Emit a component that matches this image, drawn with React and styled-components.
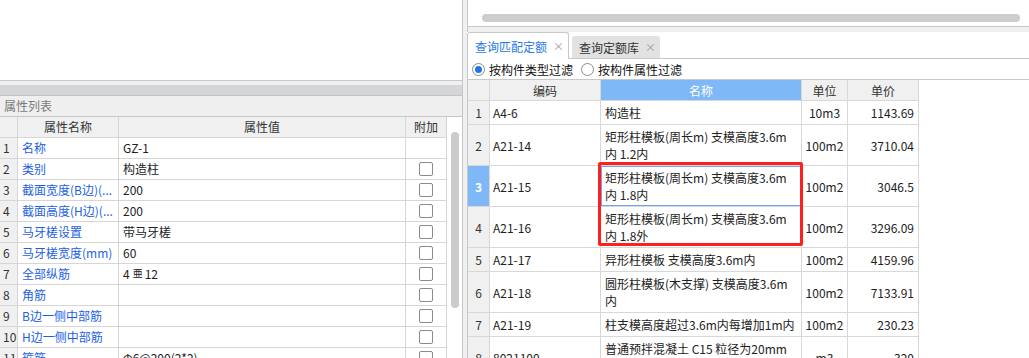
import React from 'react';
import styled, { createGlobalStyle, css } from 'styled-components';

const Global = createGlobalStyle`
  html, body { margin: 0; padding: 0; background: #fff; }
  body {
    font-family: "Noto Sans CJK SC", "Microsoft YaHei", "Liberation Sans", sans-serif;
    font-size: 12px;
    color: #222;
  }
  * { box-sizing: border-box; }
`;

const Screen = styled.div`
  display: flex;
  width: 1029px;
  height: 358px;
  overflow: hidden;
  background: #f0f0f0;
`;

/* ---------- left pane ---------- */
const LeftPane = styled.div`
  width: 463px;
  flex: none;
  display: flex;
  flex-direction: column;
  border-right: 1px solid #c6c6c6;
  background: #f0f0f0;
`;

const Canvas = styled.div`
  height: 81px;
  flex: none;
  background: #fff;
  border-bottom: 1px solid #c8c8c8;
`;

const Band = styled.div`
  margin-top: 4px;
  height: 11px;
  flex: none;
  background: #d5d6d9;
  border-bottom: 1px solid #c4c4c4;
`;

const PanelTitle = styled.div`
  height: 21px;
  flex: none;
  padding-left: 4px;
  line-height: 20px;
  color: #7b7b7b;
  background: #efefef;
  border-bottom: 1px solid #c8c8c8;
`;

const PropArea = styled.div`
  flex: 1;
  display: flex;
  background: #fff;
  min-height: 0;
`;

const PropGrid = styled.div`
  width: 447px;
  flex: none;
  display: flex;
  flex-direction: column;
`;

const PropRow = styled.div`
  display: grid;
  grid-template-columns: 18px 101px 287px 41px;
  height: 21px;
  flex: none;
`;

const PropCell = styled.div`
  border-right: 1px solid #d6d6d6;
  border-bottom: 1px solid #d6d6d6;
  line-height: 20px;
  white-space: nowrap;
  overflow: hidden;
  padding: 0 4px;
  color: #222;
  display: flex;
  align-items: center;
  ${(p) => p.$num && css`
    background: #f0f0f0;
    padding: 0 0 0 3px;
    color: #333;
  `}
  ${(p) => p.$head && css`
    background: #f0f0f0;
    justify-content: center;
    color: #333;
    padding: 0;
  `}
  ${(p) => p.$link && css`
    color: #1d5fe3;
  `}
  ${(p) => p.$center && css`
    justify-content: center;
    padding: 0;
  `}
`;

const Check = styled.span`
  width: 14px;
  height: 14px;
  border: 1px solid #8a8a8a;
  border-radius: 2px;
  background: #fff;
`;

const Rebar = styled.span`
  font-size: 10px;
  margin: 0 2px 0 3px;
  position: relative;
  top: -1px;
`;

const ScrollTrack = styled.div`
  width: 15px;
  flex: none;
  padding: 15px 3px 0 4px;
`;

const ScrollThumb = styled.div`
  width: 8px;
  height: 176px;
  border-radius: 4px;
  background: #cbcbcb;
`;

const Splitter = styled.div`
  width: 4px;
  flex: none;
  background: #f0f0f0;
`;

/* ---------- right pane ---------- */
const RightPane = styled.div`
  flex: 1;
  display: flex;
  flex-direction: column;
  border-left: 1px solid #c8c8c8;
  background: #fff;
  min-width: 0;
`;

const TopScroll = styled.div`
  height: 27px;
  flex: none;
  padding: 14px 9px 0 14px;
  border-bottom: 1px solid #c8c8c8;
  background: #fff;
`;

const HThumb = styled.div`
  height: 8px;
  border-radius: 4px;
  background: #cdcdcd;
`;

const TabGap = styled.div`
  height: 5px;
  flex: none;
  background: #f0f0f0;
`;

const TabStrip = styled.div`
  height: 27px;
  flex: none;
  display: flex;
  align-items: flex-end;
  gap: 3px;
  background: #fff;
  border-bottom: 1px solid #c8c8c8;
  margin-left: -1px;
`;

const Tab = styled.div`
  display: flex;
  align-items: center;
  gap: 6px;
  padding: 0 4px 0 7px;
  border-radius: 3px 3px 0 0;
  white-space: nowrap;
  font-size: 12px;
  ${(p) => p.$active ? css`
    height: 27px;
    margin-bottom: -1px;
    border: 1px solid #c8c8c8;
    border-bottom: none;
    background: #fff;
    color: #2a7ae6;
  ` : css`
    height: 22px;
    background: #e2e2e2;
    color: #333;
  `}
`;

const TabClose = styled.span`
  color: #9a9a9a;
  font-size: 11px;
  line-height: 1;
`;

const FilterBar = styled.div`
  height: 21px;
  flex: none;
  display: flex;
  align-items: center;
  gap: 8px;
  padding-left: 4px;
  border-bottom: 1px solid #c8c8c8;
  font-size: 12px;
  color: #111;
`;

const RadioItem = styled.label`
  display: flex;
  align-items: center;
  gap: 4px;
  white-space: nowrap;
`;

const RadioDot = styled.span`
  width: 13px;
  height: 13px;
  border-radius: 50%;
  border: 1px solid #8c8c8c;
  background: #fff;
  display: flex;
  align-items: center;
  justify-content: center;
  &::after {
    content: '';
    width: 7px;
    height: 7px;
    border-radius: 50%;
    background: ${(p) => (p.$on ? '#1f74e6' : 'transparent')};
  }
`;

const QuotaWrap = styled.div`
  position: relative;
  width: 451px;
`;

const QuotaRow = styled.div`
  display: grid;
  grid-template-columns: 22px 111px 201px 46px 71px;
  height: ${(p) => p.$h}px;
`;

const QCell = styled.div`
  border-right: 1px solid #d8d8d8;
  border-bottom: 1px solid #d8d8d8;
  overflow: hidden;
  white-space: nowrap;
  color: #222;
  line-height: 17px;
  display: flex;
  align-items: center;
  padding: 0 3px;
  ${(p) => p.$num && css`
    background: #f0f0f0;
    justify-content: center;
    padding: 0;
    color: #333;
  `}
  ${(p) => p.$sel && css`
    background: #7eb8f6;
    color: #fff;
    font-weight: 700;
  `}
  ${(p) => p.$head && css`
    background: ${p.$accent ? '#7eb8f6' : '#f0f0f0'};
    color: ${p.$accent ? '#fff' : '#333'};
    justify-content: center;
    padding: 0;
  `}
  ${(p) => p.$name && css`
    flex-direction: column;
    align-items: flex-start;
    justify-content: flex-start;
    padding: 3px 4px 0;
  `}
  ${(p) => p.$focus && css`
    box-shadow: inset 0 0 0 1px #6da7ea;
  `}
  ${(p) => p.$center && css`
    justify-content: center;
    padding: 0;
  `}
  ${(p) => p.$right && css`
    justify-content: flex-end;
    padding: 0 4px 0 0;
  `}
`;

const Line = styled.span`
  display: block;
  line-height: 17px;
`;

const Highlight = styled.div`
  position: absolute;
  left: 130px;
  top: 82px;
  width: 205px;
  height: 84px;
  border: 3px solid #ff1f1f;
  border-radius: 2px;
  pointer-events: none;
`;

const props = [
  ['名称', 'GZ-1', false],
  ['类别', '构造柱', true],
  ['截面宽度(B边)(...', '200', true],
  ['截面高度(H边)(...', '200', true],
  ['马牙槎设置', '带马牙槎', true],
  ['马牙槎宽度(mm)', '60', true],
  ['全部纵筋', 'rebar', true],
  ['角筋', '', true],
  ['B边一侧中部筋', '', true],
  ['H边一侧中部筋', '', true],
  ['箍筋', 'Φ6@200(2*2)', true],
];

const quotas = [
  { code: 'A4-6', name: ['构造柱'], unit: '10m3', price: '1143.69', h: 24 },
  { code: 'A21-14', name: ['矩形柱模板(周长m) 支模高度3.6m', '内 1.2内'], unit: '100m2', price: '3710.04', h: 41 },
  { code: 'A21-15', name: ['矩形柱模板(周长m) 支模高度3.6m', '内 1.8内'], unit: '100m2', price: '3046.5', h: 41, sel: true },
  { code: 'A21-16', name: ['矩形柱模板(周长m) 支模高度3.6m', '内 1.8外'], unit: '100m2', price: '3296.09', h: 41 },
  { code: 'A21-17', name: ['异形柱模板 支模高度3.6m内'], unit: '100m2', price: '4159.96', h: 24 },
  { code: 'A21-18', name: ['圆形柱模板(木支撑) 支模高度3.6m', '内'], unit: '100m2', price: '7133.91', h: 41 },
  { code: 'A21-19', name: ['柱支模高度超过3.6m内每增加1m内'], unit: '100m2', price: '230.23', h: 24 },
  { code: '8021100', name: ['普通预拌混凝土 C15 粒径为20mm', '石子'], unit: 'm3', price: '320', h: 41 },
];

export default function App() {
  return (
    <>
      <Global />
      <Screen>
        <LeftPane>
          <Canvas />
          <Band />
          <PanelTitle>属性列表</PanelTitle>
          <PropArea>
            <PropGrid>
              <PropRow>
                <PropCell $head />
                <PropCell $head>属性名称</PropCell>
                <PropCell $head>属性值</PropCell>
                <PropCell $head>附加</PropCell>
              </PropRow>
              {props.map(([name, value, hasCheck], i) => (
                <PropRow key={i}>
                  <PropCell $num>{i + 1}</PropCell>
                  <PropCell $link>{name}</PropCell>
                  <PropCell>
                    {value === 'rebar' ? (
                      <>4<Rebar>亜</Rebar>12</>
                    ) : value}
                  </PropCell>
                  <PropCell $center>{hasCheck && <Check />}</PropCell>
                </PropRow>
              ))}
            </PropGrid>
            <ScrollTrack>
              <ScrollThumb />
            </ScrollTrack>
          </PropArea>
        </LeftPane>
        <Splitter />
        <RightPane>
          <TopScroll>
            <HThumb />
          </TopScroll>
          <TabGap />
          <TabStrip>
            <Tab $active>
              查询匹配定额<TabClose>×</TabClose>
            </Tab>
            <Tab>
              查询定额库<TabClose>×</TabClose>
            </Tab>
          </TabStrip>
          <FilterBar>
            <RadioItem>
              <RadioDot $on />按构件类型过滤
            </RadioItem>
            <RadioItem>
              <RadioDot />按构件属性过滤
            </RadioItem>
          </FilterBar>
          <QuotaWrap>
            <QuotaRow $h={21}>
              <QCell $head />
              <QCell $head>编码</QCell>
              <QCell $head $accent>名称</QCell>
              <QCell $head>单位</QCell>
              <QCell $head>单价</QCell>
            </QuotaRow>
            {quotas.map((q, i) => (
              <QuotaRow key={q.code} $h={q.h}>
                <QCell $num $sel={q.sel}>{i + 1}</QCell>
                <QCell>{q.code}</QCell>
                <QCell $name $focus={q.sel}>
                  {q.name.map((l, j) => (
                    <Line key={j}>{l}</Line>
                  ))}
                </QCell>
                <QCell $center>{q.unit}</QCell>
                <QCell $right>{q.price}</QCell>
              </QuotaRow>
            ))}
            <Highlight />
          </QuotaWrap>
        </RightPane>
      </Screen>
    </>
  );
}
